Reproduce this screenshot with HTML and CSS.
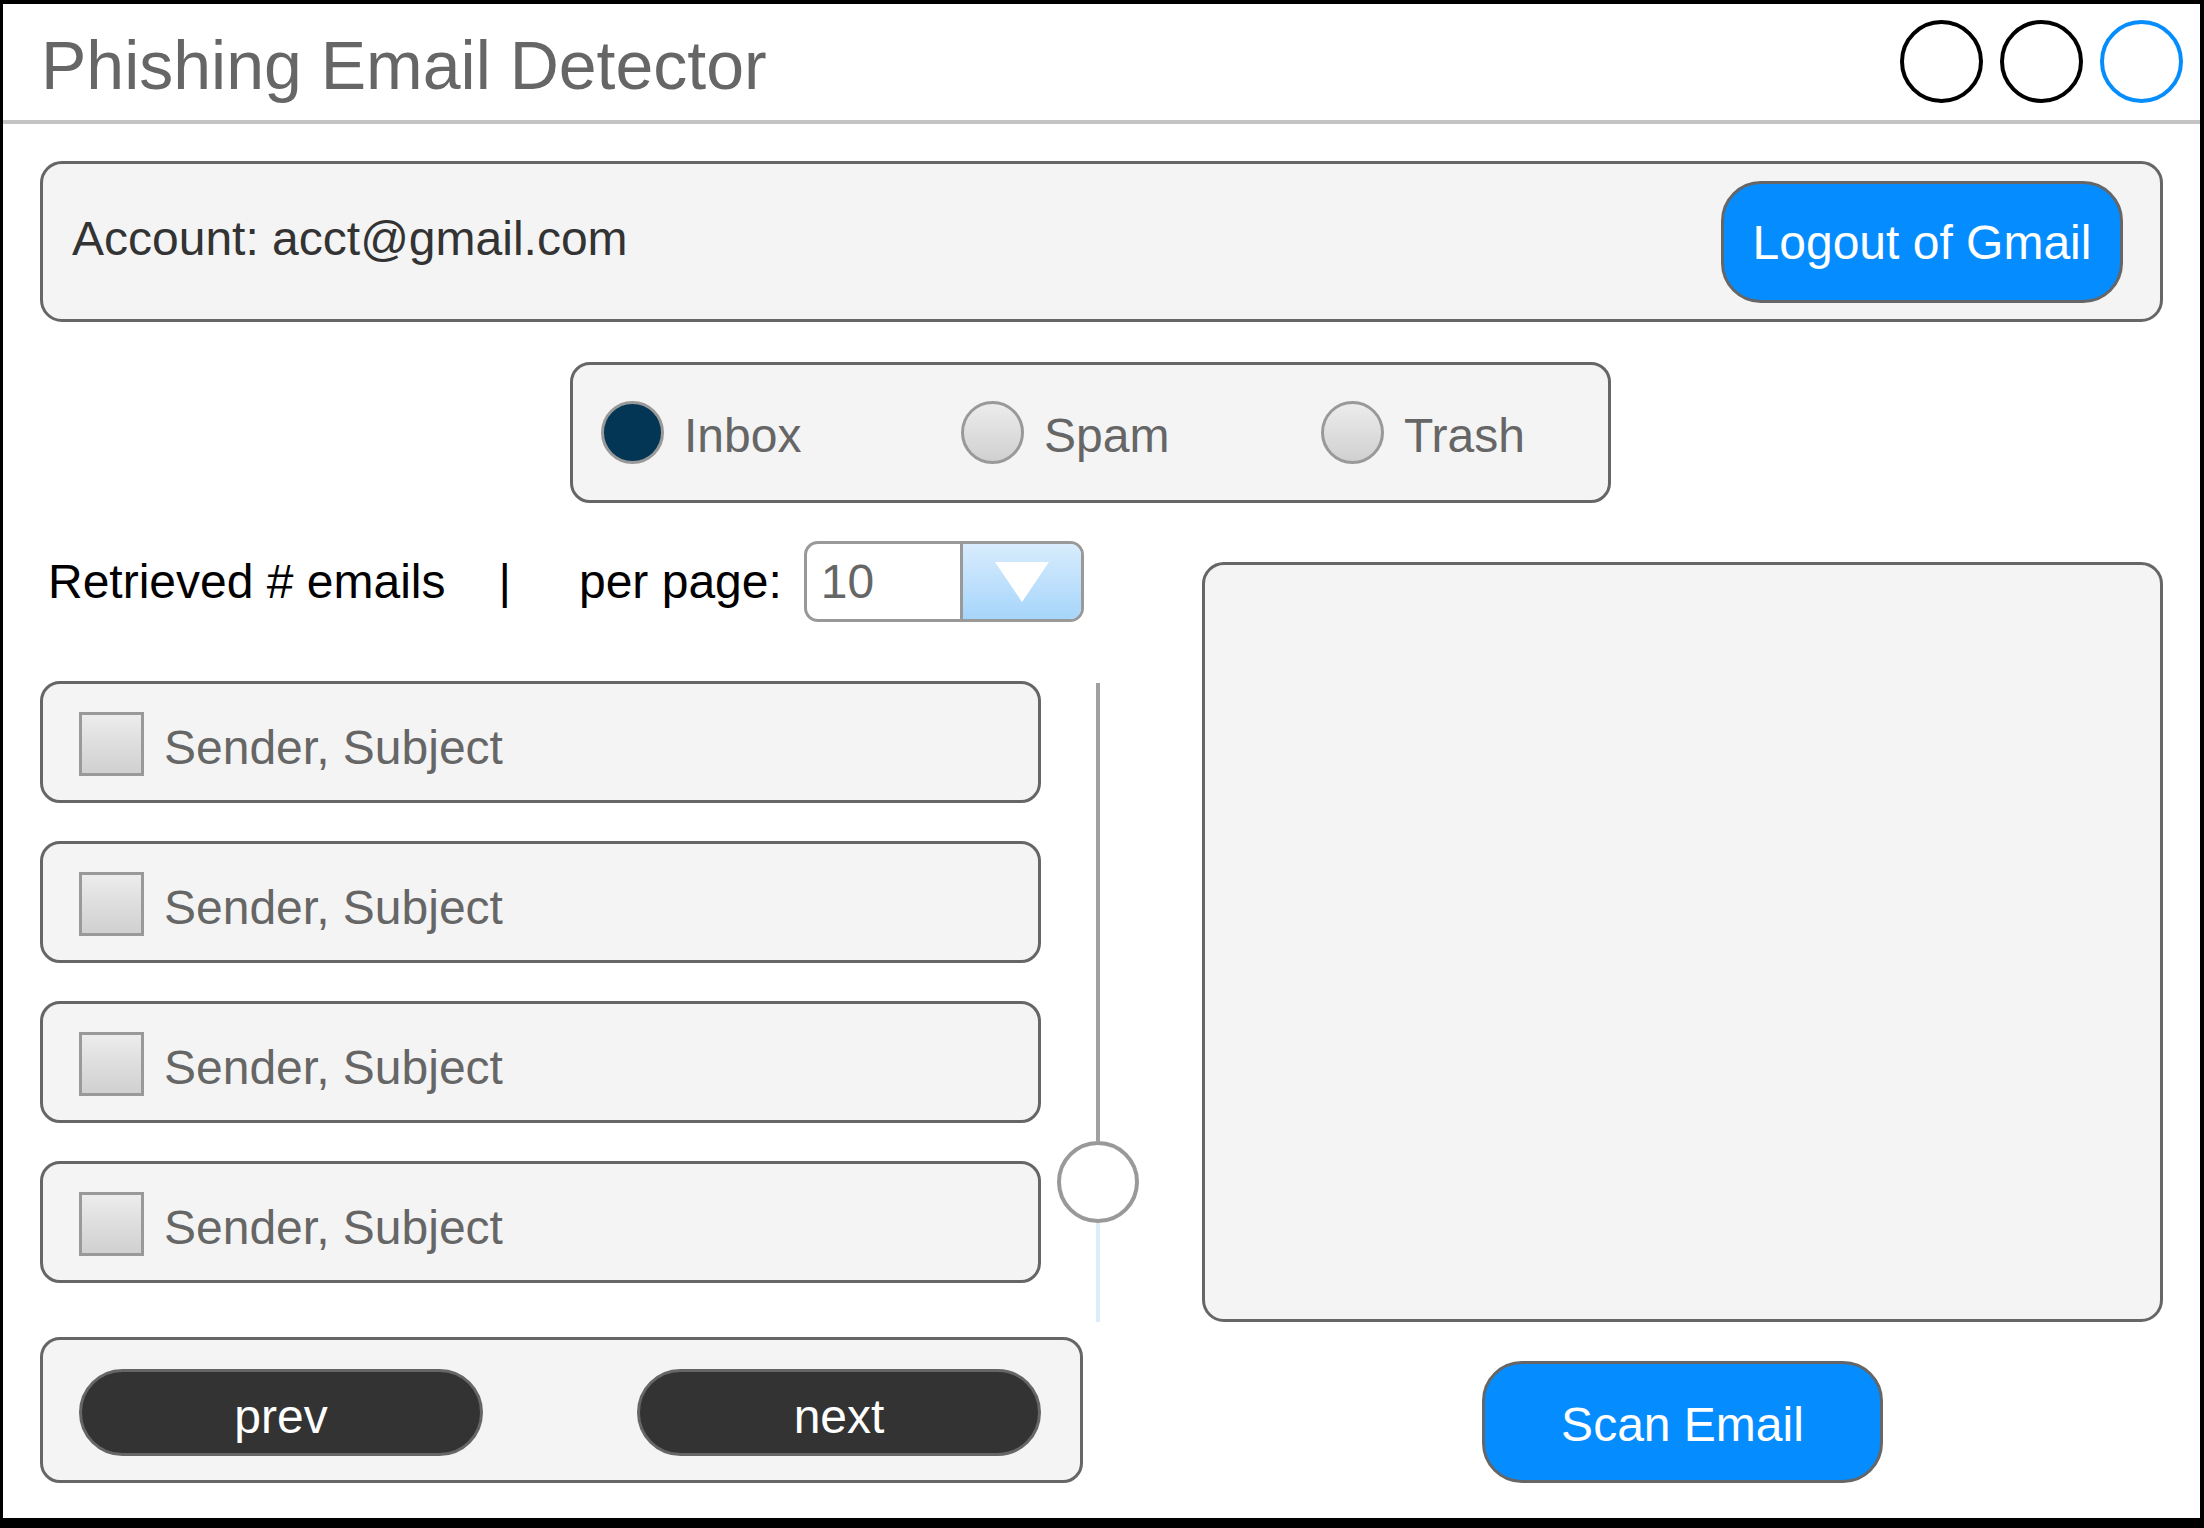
FILE: index.html
```html
<!DOCTYPE html>
<html lang="en">
<head>
<meta charset="utf-8">
<title>Phishing Email Detector</title>
<link rel="stylesheet" href="styles.css">
</head>
<body>
<div class="window">
  <header class="header">
    <h1 class="title">Phishing Email Detector</h1>
    <div class="win-controls">
      <span class="win-dot"></span>
      <span class="win-dot"></span>
      <span class="win-dot win-dot-blue"></span>
    </div>
  </header>
  <div class="divider"></div>
  <main class="content">
    <section class="account">
      <span class="account-text">Account: acct@gmail.com</span>
      <button class="btn btn-blue btn-logout">Logout of Gmail</button>
    </section>

    <section class="folders">
      <label class="radio-item"><span class="radio radio-on"></span><span class="radio-label">Inbox</span></label>
      <label class="radio-item"><span class="radio"></span><span class="radio-label">Spam</span></label>
      <label class="radio-item"><span class="radio"></span><span class="radio-label">Trash</span></label>
    </section>

    <section class="lower">
      <div class="left-col">
        <div class="count-row">
          <span class="count-text">Retrieved # emails</span>
          <span class="count-sep">|</span>
          <span class="count-per">per page:</span>
          <div class="dropdown">
            <span class="dd-value">10</span>
            <span class="dd-btn"><span class="dd-arrow"></span></span>
          </div>
        </div>
        <div class="list-area">
          <div class="items">
            <div class="item"><span class="checkbox"></span><span class="item-label">Sender, Subject</span></div>
            <div class="item"><span class="checkbox"></span><span class="item-label">Sender, Subject</span></div>
            <div class="item"><span class="checkbox"></span><span class="item-label">Sender, Subject</span></div>
            <div class="item"><span class="checkbox"></span><span class="item-label">Sender, Subject</span></div>
          </div>
          <div class="slider">
            <span class="track-top"></span>
            <span class="knob"></span>
            <span class="track-bottom"></span>
          </div>
        </div>
        <div class="nav">
          <button class="btn btn-dark">prev</button>
          <button class="btn btn-dark">next</button>
        </div>
      </div>
      <div class="right-col">
        <div class="preview"></div>
        <button class="btn btn-blue btn-scan">Scan Email</button>
      </div>
    </section>
  </main>
</div>
</body>
</html>
```
FILE: styles.css
```css
* { box-sizing: border-box; }

html, body {
  margin: 0;
  background: #000;
}

body {
  width: 2204px;
  height: 1528px;
  padding: 4px 4px 10px 3px;
  font-family: "Liberation Sans", Arial, Helvetica, sans-serif;
  overflow: hidden;
}

.window {
  width: 2197px;
  height: 1514px;
  background: #fff;
  display: flex;
  flex-direction: column;
}

/* Header */
.header {
  height: 116px;
  display: flex;
  justify-content: space-between;
  align-items: flex-start;
  padding: 0 17px 0 38px;
}

.title {
  margin: 27px 0 0 0;
  font-size: 68px;
  line-height: 68px;
  font-weight: normal;
  color: #666;
}

.win-controls {
  display: flex;
  gap: 17px;
  margin-top: 16px;
}

.win-dot {
  width: 83px;
  height: 83px;
  border: 4px solid #000;
  border-radius: 50%;
}

.win-dot-blue { border-color: #068dfc; }

.divider {
  height: 4px;
  background: #c4c4c4;
}

/* Content */
.content {
  padding: 37px 37px 0 37px;
  display: flex;
  flex-direction: column;
}

.account {
  height: 161px;
  border: 3px solid #666;
  border-radius: 22px;
  background: #f4f4f4;
  display: flex;
  align-items: center;
  justify-content: space-between;
  padding: 0 37px 0 29px;
}

.account-text {
  font-size: 48px;
  line-height: 48px;
  color: #333;
  margin-bottom: 6px;
}

.btn {
  font-family: "Liberation Sans", Arial, Helvetica, sans-serif;
  font-size: 48px;
  line-height: 48px;
  color: #fff;
  border: 3px solid #666;
  padding: 0;
  display: flex;
  align-items: center;
  justify-content: center;
}

.btn-blue { background: #058cff; }

.btn-logout {
  width: 402px;
  height: 122px;
  border-radius: 40px;
  padding-top: 3px;
}

/* Folder radio group */
.folders {
  margin-top: 40px;
  margin-left: 530px;
  width: 1041px;
  height: 141px;
  border: 3px solid #666;
  border-radius: 20px;
  background: #f4f4f4;
  display: flex;
  align-items: center;
  padding-left: 28px;
}

.radio-item {
  width: 360px;
  flex: none;
  display: flex;
  align-items: center;
  gap: 20px;
}

.radio {
  width: 63px;
  height: 63px;
  border: 3px solid #999;
  border-radius: 50%;
  background: linear-gradient(#ececec, #d0d0d0);
}

.radio-on { background: #023654; }

.radio-label {
  font-size: 48px;
  line-height: 48px;
  color: #666;
  margin-top: 6px;
}

/* Lower area */
.lower {
  margin-top: 38px;
  display: flex;
}

.left-col {
  width: 1099px;
  flex: none;
  display: flex;
  flex-direction: column;
}

.count-row {
  height: 81px;
  display: flex;
  align-items: center;
  font-size: 48px;
  line-height: 48px;
  color: #000;
}

.count-text { margin-left: 8px; }
.count-sep { margin-left: 53px; }
.count-per { margin-left: 68px; }

.dropdown {
  margin-left: 22px;
  width: 280px;
  height: 81px;
  border: 3px solid #999;
  border-radius: 14px;
  overflow: hidden;
  display: flex;
  background: #fff;
}

.dd-value {
  flex: 1;
  display: flex;
  align-items: center;
  padding-left: 14px;
  color: #666;
}

.dd-btn {
  width: 121px;
  border-left: 3px solid #999;
  background: linear-gradient(#d8ecfd, #a6d5fb);
  display: flex;
  align-items: center;
  justify-content: center;
}

.dd-arrow {
  width: 0;
  height: 0;
  border-left: 27px solid transparent;
  border-right: 27px solid transparent;
  border-top: 40px solid #fff;
}

.list-area {
  margin-top: 59px;
  display: flex;
}

.items {
  width: 1001px;
  display: flex;
  flex-direction: column;
  gap: 38px;
}

.item {
  height: 122px;
  border: 3px solid #666;
  border-radius: 20px;
  background: #f4f4f4;
  display: flex;
  align-items: center;
  padding-left: 36px;
}

.checkbox {
  width: 65px;
  height: 64px;
  border: 3px solid #999;
  background: linear-gradient(#ececec, #d0d0d0);
  margin-top: 4px;
}

.item-label {
  margin-left: 20px;
  font-size: 48px;
  line-height: 48px;
  color: #666;
  margin-top: 12px;
}

.slider {
  margin-left: 16px;
  margin-top: 2px;
  width: 82px;
  display: flex;
  flex-direction: column;
  align-items: center;
}

.track-top {
  width: 4px;
  height: 458px;
  background: #a0a0a0;
}

.knob {
  width: 82px;
  height: 82px;
  border: 4px solid #999;
  border-radius: 50%;
  background: #fff;
}

.track-bottom {
  width: 4px;
  height: 99px;
  background: #dbedfd;
}

.nav {
  margin-top: 15px;
  width: 1043px;
  height: 146px;
  border: 3px solid #666;
  border-radius: 20px;
  background: #f4f4f4;
  display: flex;
  align-items: center;
  justify-content: space-between;
  padding: 4px 39px 0 36px;
}

.btn-dark {
  width: 404px;
  height: 87px;
  border-radius: 44px;
  background: #333;
  padding-top: 10px;
}

.right-col {
  flex: 1;
  margin-left: 63px;
  display: flex;
  flex-direction: column;
  align-items: center;
}

.preview {
  align-self: stretch;
  margin-top: 21px;
  height: 760px;
  border: 3px solid #666;
  border-radius: 22px;
  background: #f4f4f4;
}

.btn-scan {
  margin-top: 39px;
  width: 401px;
  height: 122px;
  border-radius: 40px;
  padding-top: 6px;
}
```
